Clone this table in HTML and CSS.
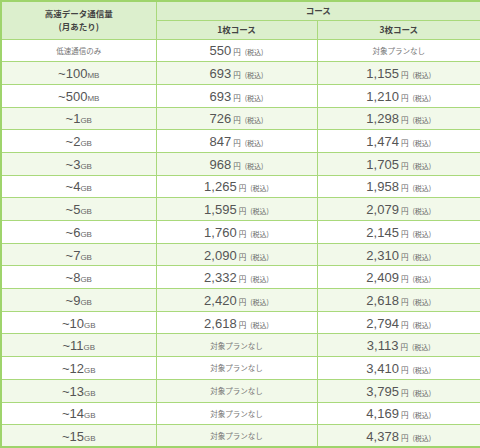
FILE: index.html
```html
<!DOCTYPE html>
<html lang="ja">
<head>
<meta charset="utf-8">
<link rel="stylesheet" href="styles.css">
</head>
<body>
<table class="plan">
  <colgroup><col class="c1"><col class="c2"><col class="c3"></colgroup>
  <thead>
    <tr class="h1"><th rowspan="2" class="hd">高速データ通信量<br>(月あたり)</th><th colspan="2">コース</th></tr>
    <tr class="h2"><th>1枚コース</th><th>3枚コース</th></tr>
  </thead>
  <tbody>
    <tr><td class="na">低速通信のみ</td><td><span class="n">550</span><span class="y">円</span><span class="t">(税込)</span></td><td class="na">対象プランなし</td></tr>
    <tr><td><span class="n">~100</span><span class="u">MB</span></td><td><span class="n">693</span><span class="y">円</span><span class="t">(税込)</span></td><td><span class="n">1,155</span><span class="y">円</span><span class="t">(税込)</span></td></tr>
    <tr><td><span class="n">~500</span><span class="u">MB</span></td><td><span class="n">693</span><span class="y">円</span><span class="t">(税込)</span></td><td><span class="n">1,210</span><span class="y">円</span><span class="t">(税込)</span></td></tr>
    <tr><td><span class="n">~1</span><span class="u">GB</span></td><td><span class="n">726</span><span class="y">円</span><span class="t">(税込)</span></td><td><span class="n">1,298</span><span class="y">円</span><span class="t">(税込)</span></td></tr>
    <tr><td><span class="n">~2</span><span class="u">GB</span></td><td><span class="n">847</span><span class="y">円</span><span class="t">(税込)</span></td><td><span class="n">1,474</span><span class="y">円</span><span class="t">(税込)</span></td></tr>
    <tr><td><span class="n">~3</span><span class="u">GB</span></td><td><span class="n">968</span><span class="y">円</span><span class="t">(税込)</span></td><td><span class="n">1,705</span><span class="y">円</span><span class="t">(税込)</span></td></tr>
    <tr><td><span class="n">~4</span><span class="u">GB</span></td><td><span class="n">1,265</span><span class="y">円</span><span class="t">(税込)</span></td><td><span class="n">1,958</span><span class="y">円</span><span class="t">(税込)</span></td></tr>
    <tr><td><span class="n">~5</span><span class="u">GB</span></td><td><span class="n">1,595</span><span class="y">円</span><span class="t">(税込)</span></td><td><span class="n">2,079</span><span class="y">円</span><span class="t">(税込)</span></td></tr>
    <tr><td><span class="n">~6</span><span class="u">GB</span></td><td><span class="n">1,760</span><span class="y">円</span><span class="t">(税込)</span></td><td><span class="n">2,145</span><span class="y">円</span><span class="t">(税込)</span></td></tr>
    <tr><td><span class="n">~7</span><span class="u">GB</span></td><td><span class="n">2,090</span><span class="y">円</span><span class="t">(税込)</span></td><td><span class="n">2,310</span><span class="y">円</span><span class="t">(税込)</span></td></tr>
    <tr><td><span class="n">~8</span><span class="u">GB</span></td><td><span class="n">2,332</span><span class="y">円</span><span class="t">(税込)</span></td><td><span class="n">2,409</span><span class="y">円</span><span class="t">(税込)</span></td></tr>
    <tr><td><span class="n">~9</span><span class="u">GB</span></td><td><span class="n">2,420</span><span class="y">円</span><span class="t">(税込)</span></td><td><span class="n">2,618</span><span class="y">円</span><span class="t">(税込)</span></td></tr>
    <tr><td><span class="n">~10</span><span class="u">GB</span></td><td><span class="n">2,618</span><span class="y">円</span><span class="t">(税込)</span></td><td><span class="n">2,794</span><span class="y">円</span><span class="t">(税込)</span></td></tr>
    <tr><td><span class="n">~11</span><span class="u">GB</span></td><td class="na">対象プランなし</td><td><span class="n">3,113</span><span class="y">円</span><span class="t">(税込)</span></td></tr>
    <tr><td><span class="n">~12</span><span class="u">GB</span></td><td class="na">対象プランなし</td><td><span class="n">3,410</span><span class="y">円</span><span class="t">(税込)</span></td></tr>
    <tr><td><span class="n">~13</span><span class="u">GB</span></td><td class="na">対象プランなし</td><td><span class="n">3,795</span><span class="y">円</span><span class="t">(税込)</span></td></tr>
    <tr><td><span class="n">~14</span><span class="u">GB</span></td><td class="na">対象プランなし</td><td><span class="n">4,169</span><span class="y">円</span><span class="t">(税込)</span></td></tr>
    <tr><td><span class="n">~15</span><span class="u">GB</span></td><td class="na">対象プランなし</td><td><span class="n">4,378</span><span class="y">円</span><span class="t">(税込)</span></td></tr>
  </tbody>
</table>
</body>
</html>
```
FILE: styles.css
```css
html, body {
  margin: 0;
  padding: 0;
  background: #ffffff;
}
body {
  font-family: "Liberation Sans", "Noto Sans CJK JP", sans-serif;
  color: #555555;
}
.plan {
  width: 480px;
  border-collapse: collapse;
  table-layout: fixed;
  border: 2px solid #9fd46c;
}
.c1 { width: 155px; }
.c2 { width: 161px; }
.c3 { width: 164px; }
.plan th, .plan td {
  border: 1px solid #a9d97b;
  padding: 0;
  text-align: center;
  vertical-align: middle;
}
.plan th {
  background: #dcefcd;
  font-family: "Noto Sans CJK JP", sans-serif;
  font-size: 8.5px;
  font-weight: 700;
  color: #444444;
  line-height: 13px;
}
.plan .h1 { height: 19px; }
.plan .h2 { height: 19px; }
.plan tbody tr { height: 22.7px; }
.plan tbody tr:nth-child(even) td { background: #f2f9ea; }
.plan tbody tr:nth-child(odd) td { background: #ffffff; }
.n {
  font-size: 13px;
  color: #555555;
}
.u {
  font-size: 8px;
  color: #666666;
}
.y {
  font-family: "Noto Sans CJK JP", sans-serif;
  font-size: 7.5px;
  color: #666666;
  margin-left: 2px;
}
.t {
  font-family: "Noto Sans CJK JP", sans-serif;
  font-size: 7px;
  color: #666666;
  margin-left: 4px;
}
.na {
  font-family: "Noto Sans CJK JP", sans-serif;
  font-size: 7.5px;
  color: #777777;
}
```
